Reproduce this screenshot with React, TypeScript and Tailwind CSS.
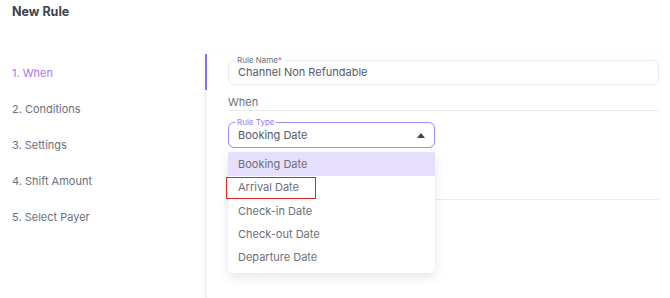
import React from "react";

const steps = ["1. When", "2. Conditions", "3. Settings", "4. Shift Amount", "5. Select Payer"];
const options = ["Booking Date", "Arrival Date", "Check-in Date", "Check-out Date", "Departure Date"];

export default function App() {
  return (
    <div
      className="relative w-[670px] h-[298px] overflow-hidden bg-white text-[#6b6f7b]"
      style={{ fontFamily: "Inter, 'Noto Sans', sans-serif" }}
    >
      <div className="pl-3 pt-[4px] text-[12.5px] leading-[16px] font-bold text-[#3f4350]">New Rule</div>

      <div className="flex mt-[34px]">
        {/* steps */}
        <div className="w-[205px] pl-3 pt-[11px] flex flex-col gap-[20px] text-[11px] leading-[16px]">
          {steps.map((s, i) => (
            <div key={s} className={i === 0 ? "text-[#9f7aea]" : "text-[#6b6f7b]"}>
              {s}
            </div>
          ))}
        </div>

        {/* panel */}
        <div className="relative flex-1 h-[244px] border-l-2 border-[#f1f1f3] shadow-[-2px_0_4px_rgba(0,0,0,0.03)] pl-[21px] pr-[11px] pt-[6px]">
          <div className="absolute -left-[2px] top-0 w-[2px] h-[36px] bg-[#8b6cf6]" />

          {/* rule name */}
          <div className="relative h-[25px] rounded-[6px] border border-[#ececee] flex items-center pl-[9px] text-[11px] text-[#55596a]">
            <span className="absolute -top-[6px] left-[6px] bg-white px-[2px] text-[8px] leading-[10px] text-[#6b6f7b]">
              Rule Name<span className="text-[#e0457b]">*</span>
            </span>
            Channel Non Refundable
          </div>

          <div className="mt-[9px] border-b border-[#ececee] text-[11px] leading-[16px] text-[#6b6f7b]">When</div>

          {/* rule type */}
          <div className="relative mt-[11px] w-[207px] h-[26px] rounded-[6px] border border-[#a58bf7] flex items-center justify-between pl-[9px] pr-[9px] text-[11px] text-[#55596a]">
            <span className="absolute -top-[6px] left-[6px] bg-white px-[2px] text-[8px] leading-[10px] text-[#9f7aea]">
              Rule Type
            </span>
            Booking Date
            <svg width="8" height="5" viewBox="0 0 8 5">
              <path d="M0 5 L4 0 L8 5 Z" fill="#3f4350" />
            </svg>
          </div>

          {/* field hidden behind menu */}
          <div className="mt-[4px] w-[207px] h-[33px] rounded-[6px] border border-[#ececee]" />
          <div className="mt-[14px] border-b border-[#ececee]" />

          {/* dropdown */}
          <div className="absolute left-[21px] top-[98px] w-[207px] rounded-b-[6px] bg-white pb-[4px] shadow-[0_4px_12px_rgba(0,0,0,0.10)] text-[11px] text-[#6b6f7b]">
            {options.map((o, i) => (
              <div
                key={o}
                className={`flex items-center pl-[10px] ${i === 0 ? "bg-[#e6e0fc] h-[24px]" : "h-[23.3px]"}`}
              >
                {o}
              </div>
            ))}
          </div>

          {/* highlight */}
          <div className="absolute left-[19px] top-[123px] w-[90px] h-[22px] border-[1.5px] border-[#e02424]" />
        </div>
      </div>
    </div>
  );
}
